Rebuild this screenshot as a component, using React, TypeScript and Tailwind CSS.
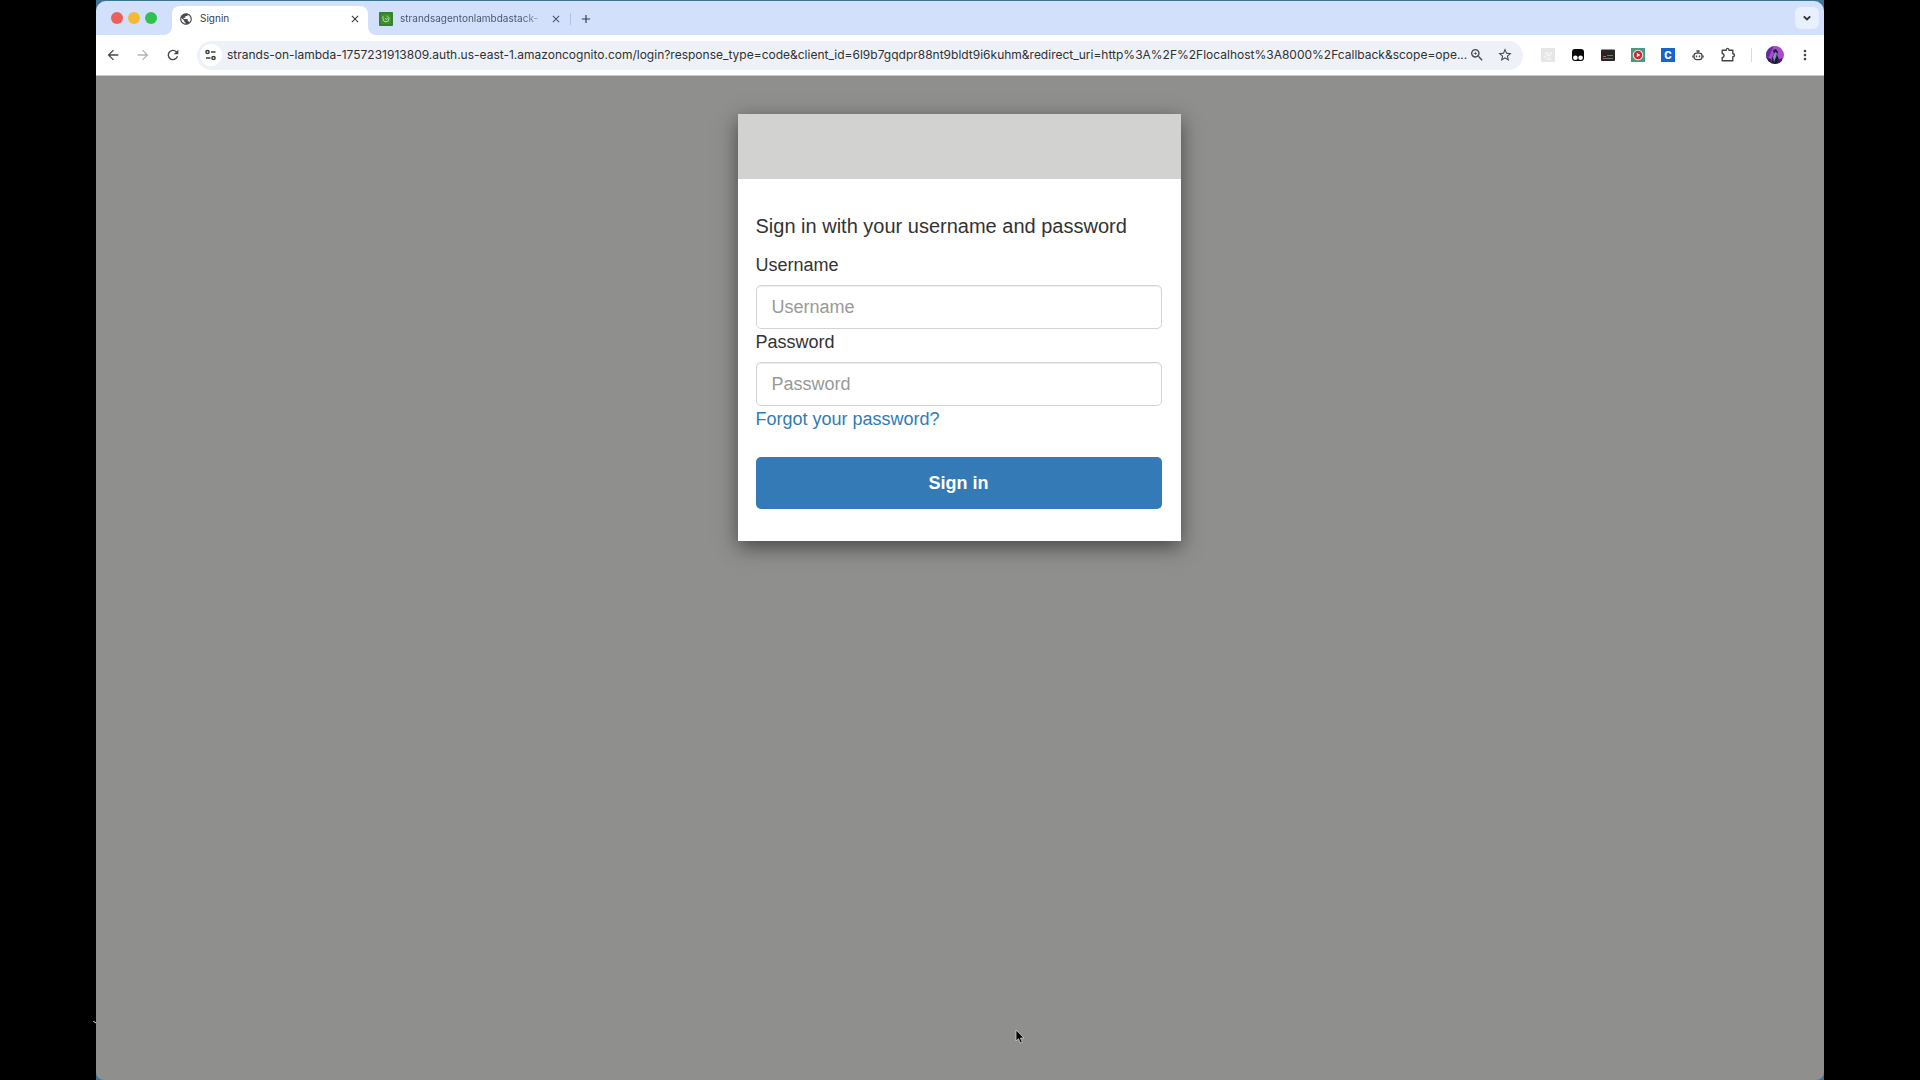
import {
  MdAdd,
  MdArrowBack,
  MdArrowForward,
  MdClose,
  MdMoreVert,
  MdPublic,
  MdRefresh,
  MdStarOutline,
  MdZoomIn,
} from "react-icons/md";

const url =
  "strands-on-lambda-1757231913809.auth.us-east-1.amazoncognito.com/login?response_type=code&client_id=6l9b7gqdpr88nt9bldt9i6kuhm&redirect_uri=http%3A%2F%2Flocalhost%3A8000%2Fcallback&scope=ope...";

const TuneIcon = () => (
  <svg viewBox="0 0 14 14" className="w-3.5 h-3.5" fill="none" stroke="#3c4043" strokeWidth="1.5">
    <circle cx="3.5" cy="4" r="1.6" />
    <path d="M7 4h4.500M2 10h4.500" />
    <circle cx="9.500" cy="10" r="1.6" />
  </svg>
);

const ChevronIcon = () => (
  <svg viewBox="0 0 14 14" className="w-3.5 h-3.5" fill="none" stroke="#333" strokeWidth="1.900">
    <path d="M3.800 5.300L7 8.500l3.200-3.200" />
  </svg>
);

const GreenIcon = () => (
  <svg viewBox="0 0 14 14" className="w-3.5 h-3.5 shrink-0">
    <rect width="14" height="14" rx="1" fill="#3f8f2f" />
    <rect x="1" y="1" width="12" height="12" fill="none" stroke="#2f7425" />
    <path d="M4 4.2v2.6a3 3 0 0 0 6 0c0-1.500-1-2.600-2.500-2.800M6 6.300l1.500 1 1.700-1.300" fill="none" stroke="#b5dda6" />
  </svg>
);

const FadedIcon = () => (
  <svg viewBox="0 0 14 14" className="w-3.5 h-3.5">
    <rect width="14" height="14" fill="#e6e6e6" />
    <path d="M3 10l3-3 2 1 3-4M4 5h4M6 11h4" fill="none" stroke="#f6f6f6" strokeWidth="1.400" />
  </svg>
);

const MonkeyIcon = () => (
  <svg viewBox="0 0 14 14" className="w-3.5 h-3.5">
    <rect x="1" y="1" width="12" height="12" rx="3" fill="#0a0a0a" />
    <circle cx="4.400" cy="9.800" r="2.300" fill="#fff" />
    <circle cx="9.600" cy="9.800" r="2.300" fill="#fff" />
  </svg>
);

const SubtitleIcon = () => (
  <svg viewBox="0 0 14 14" className="w-3.5 h-3.5">
    <rect y="1.500" width="14" height="11.500" rx="1" fill="#2a2626" />
    <path d="M2 8.500h3M6 7.500h6" stroke="#c9524b" strokeWidth="1.200" />
    <path d="M2 10.500h10" stroke="#8a8a8a" strokeWidth="0.800" />
  </svg>
);

const RecorderIcon = () => (
  <svg viewBox="0 0 14 14" className="w-3.5 h-3.5">
    <rect width="14" height="14" fill="#4a9a80" />
    <circle cx="7" cy="7" r="5.300" fill="#f3dedd" />
    <circle cx="7" cy="7" r="4.200" fill="#cf2638" />
    <path d="M5.800 4.800v4.400L9.300 7z" fill="#fff" />
  </svg>
);

const LetterIcon = () => (
  <span className="flex w-3.5 h-3.5 items-center justify-center bg-[#1a62d0] text-[10px] leading-none font-extrabold text-white">
    C
  </span>
);

const RobotIcon = () => (
  <svg viewBox="0 0 14 14" className="w-3.5 h-3.5" fill="none" stroke="#454545" strokeWidth="1.300">
    <rect x="3" y="5.200" width="8" height="6.400" rx="2.600" />
    <path d="M7 5V2.800M5.400 3h3.200M1.900 7.400v2.200M12.100 7.400v2.200" />
    <path d="M5.500 7.600v1.600M8.500 7.600v1.600" strokeWidth="1.400" />
  </svg>
);

const PuzzleIcon = () => (
  <svg
    viewBox="0 0 14 14"
    className="w-3.5 h-3.5 overflow-visible"
    fill="none"
    stroke="#454545"
    strokeWidth="1.400"
    strokeLinejoin="round"
  >
    <path d="M1.200 2.200H5.200C5.200-.2 8-.2 8 2.200H11.800V5.800C14 5.800 14 8.800 11.800 8.800V12.800H1.200V9.500C3.700 9.300 3.700 5.700 1.200 5.500Z" />
  </svg>
);

const Avatar = () => (
  <svg viewBox="0 0 18 18" className="w-[18px] h-[18px]">
    <defs>
      <clipPath id="avatar">
        <circle cx="9" cy="9" r="9" />
      </clipPath>
    </defs>
    <g clipPath="url(#avatar)">
      <rect width="18" height="18" fill="#a94ccb" />
      <path d="M0 0h8L5 6 3 11l-3 1z" fill="#6b2a9c" />
      <path d="M7 4l3-1 2 3-1 3 2 4v5H5l1-6 2-4z" fill="#211c3d" />
      <path d="M9 6l2 1-1 4-2 5-1-5z" fill="#7d93c6" />
      <path d="M0 11l5 2 1 5H0z" fill="#2b2540" />
      <path d="M12 14l4-2v5l-4 1z" fill="#40265f" />
    </g>
  </svg>
);

const extensions = [
  { name: "Disabled extension", icon: FadedIcon },
  { name: "Tampermonkey", icon: MonkeyIcon },
  { name: "Subtitles", icon: SubtitleIcon },
  { name: "Recorder", icon: RecorderIcon },
  { name: "C", icon: LetterIcon },
  { name: "Robot", icon: RobotIcon },
  { name: "Extensions", icon: PuzzleIcon },
];

const TabStrip = () => (
  <div className="flex h-[34px] items-end bg-[#d3e0fb]">
    <div className="flex h-[34px] w-[76px] items-center gap-[5px] pl-[15px]">
      <span className="w-3 h-3 rounded-full bg-[#ed5f5b]" />
      <span className="w-3 h-3 rounded-full bg-[#f5b935]" />
      <span className="w-3 h-3 rounded-full bg-[#2fc24f]" />
    </div>
    <div className="relative flex h-[29px] w-[196px] items-center gap-[7px] rounded-t-lg bg-white px-[7px] pb-1">
      <svg viewBox="0 0 8 8" className="absolute bottom-0 -left-2 w-2 h-2" fill="#fff">
        <path d="M8 0v8H0a8 8 0 0 0 8-8z" />
      </svg>
      <svg viewBox="0 0 8 8" className="absolute bottom-0 -right-2 w-2 h-2" fill="#fff">
        <path d="M0 0v8h8a8 8 0 0 1-8-8z" />
      </svg>
      <MdPublic className="w-3.5 h-3.5 text-[#4a4d51]" />
      <span className="flex-1 text-[10px] text-[#3c4043]">Signin</span>
      <button aria-label="Close Signin">
        <MdClose className="w-3 h-3 text-[#333]" />
      </button>
    </div>
    <div className="flex h-[29px] w-[202px] items-center gap-[7px] pb-1 pl-[11px] pr-2">
      <GreenIcon />
      <span className="flex-1 whitespace-nowrap bg-gradient-to-r from-[#46526a] from-85% to-[#46526a]/30 bg-clip-text text-[10px] text-transparent">
        strandsagentonlambdastack-
      </span>
      <button aria-label="Close strandsagentonlambdastack">
        <MdClose className="w-3 h-3 text-[#46526a]" />
      </button>
    </div>
    <div className="flex h-[29px] flex-1 items-center pb-1">
      <span className="w-px h-3 bg-[#b3c2e2]" />
      <button aria-label="New tab" className="ml-2">
        <MdAdd className="w-3.5 h-3.5 text-[#333b4b]" />
      </button>
    </div>
    <button
      aria-label="Search tabs"
      className="mr-[5px] mb-1.5 flex w-6 h-[22px] items-center justify-center rounded-md bg-[#e9f0fd]"
    >
      <ChevronIcon />
    </button>
  </div>
);

const Toolbar = () => (
  <div className="flex h-[41px] items-center border-b border-[#c9c9c9] bg-white pr-[11px] pl-[9px] text-[#474747]">
    <div className="flex gap-3.5">
      <button aria-label="Back">
        <MdArrowBack className="w-4 h-4" />
      </button>
      <button aria-label="Forward" className="text-[#b4b4b4]">
        <MdArrowForward className="w-4 h-4" />
      </button>
      <button aria-label="Reload">
        <MdRefresh className="w-4 h-4" />
      </button>
    </div>
    <div className="ml-4 flex h-[29px] min-w-0 flex-1 items-center rounded-full bg-[#eef2f8] pr-2.5 pl-[3px]">
      <button
        aria-label="Site information"
        className="flex w-[22px] h-[22px] shrink-0 items-center justify-center rounded-full bg-white"
      >
        <TuneIcon />
      </button>
      <input
        aria-label="Address"
        readOnly
        value={url}
        className="ml-[5px] min-w-0 flex-1 text-ellipsis bg-transparent text-[12px] text-[#2f3134] outline-none"
      />
      <button aria-label="Zoom">
        <MdZoomIn className="w-4 h-4" />
      </button>
      <button aria-label="Bookmark" className="ml-3">
        <MdStarOutline className="w-4 h-4" />
      </button>
    </div>
    <div className="ml-[18px] flex gap-4">
      {extensions.map(({ name, icon: Icon }) => (
        <button key={name} aria-label={name}>
          <Icon />
        </button>
      ))}
    </div>
    <span className="ml-4 w-px h-3.5 bg-[#d5daea]" />
    <button aria-label="Profile" className="ml-3.5">
      <Avatar />
    </button>
    <button aria-label="Menu" className="ml-[13px]">
      <MdMoreVert className="w-4 h-4" />
    </button>
  </div>
);

const Field = ({ label, type }: { label: string; type: string }) => (
  <div className="flex flex-col gap-1.5">
    <label htmlFor={type} className="leading-[27px]">
      {label}
    </label>
    <input
      id={type}
      type={type}
      placeholder={label}
      className="h-11 rounded-[5px] border border-[#d4d4d4] px-[15px] shadow-[inset_0_1px_1px_rgba(0,0,0,0.075)] outline-none placeholder:text-[#999]"
    />
  </div>
);

const SignInCard = () => (
  <div className="w-[443px] bg-white font-['Liberation_Sans',Arial,sans-serif] text-[18px] text-[#333] shadow-[0_6px_19px_rgba(0,0,0,0.5)]">
    <div className="h-[65px] bg-[#d2d2d0]" />
    <form className="flex flex-col pt-[33px] pr-[19px] pb-8 pl-[18px]" onSubmit={(e) => e.preventDefault()}>
      <h1 className="mb-3 text-[20px] leading-7">Sign in with your username and password</h1>
      <Field label="Username" type="text" />
      <Field label="Password" type="password" />
      <a href="#" className="self-start leading-[27px] text-[#337ab7]">
        Forgot your password?
      </a>
      <button className="mt-6 h-[52px] rounded-[5px] bg-[#337ab7] font-bold text-white">Sign in</button>
    </form>
  </div>
);

export default function App() {
  return (
    <div className="relative flex min-h-screen flex-col bg-black px-24 font-['Inter','Liberation_Sans',sans-serif]">
      <div className="flex flex-1 flex-col bg-[#3f7392] pt-px">
        <div className="flex flex-1 flex-col overflow-hidden rounded-t-[10px] rounded-b-lg bg-[#8f8f8d]">
          <TabStrip />
          <Toolbar />
          <main className="flex flex-1 flex-col items-center pt-[38px] pr-0.5">
            <SignInCard />
          </main>
        </div>
      </div>
      <svg viewBox="0 0 10 16" className="absolute top-[1029px] left-[1015px] w-2.5 h-4">
        <path d="M1 1v11l2.500-2.300L5.300 14l2-.9-1.800-4L9 9z" fill="#080808" stroke="#dcdcdc" strokeWidth="0.700" />
      </svg>
      <svg viewBox="0 0 3 3" className="absolute top-[1021px] left-[93px] w-[3px] h-[3px]">
        <path d="M0 0l3 2" stroke="#ddd" />
      </svg>
    </div>
  );
}
